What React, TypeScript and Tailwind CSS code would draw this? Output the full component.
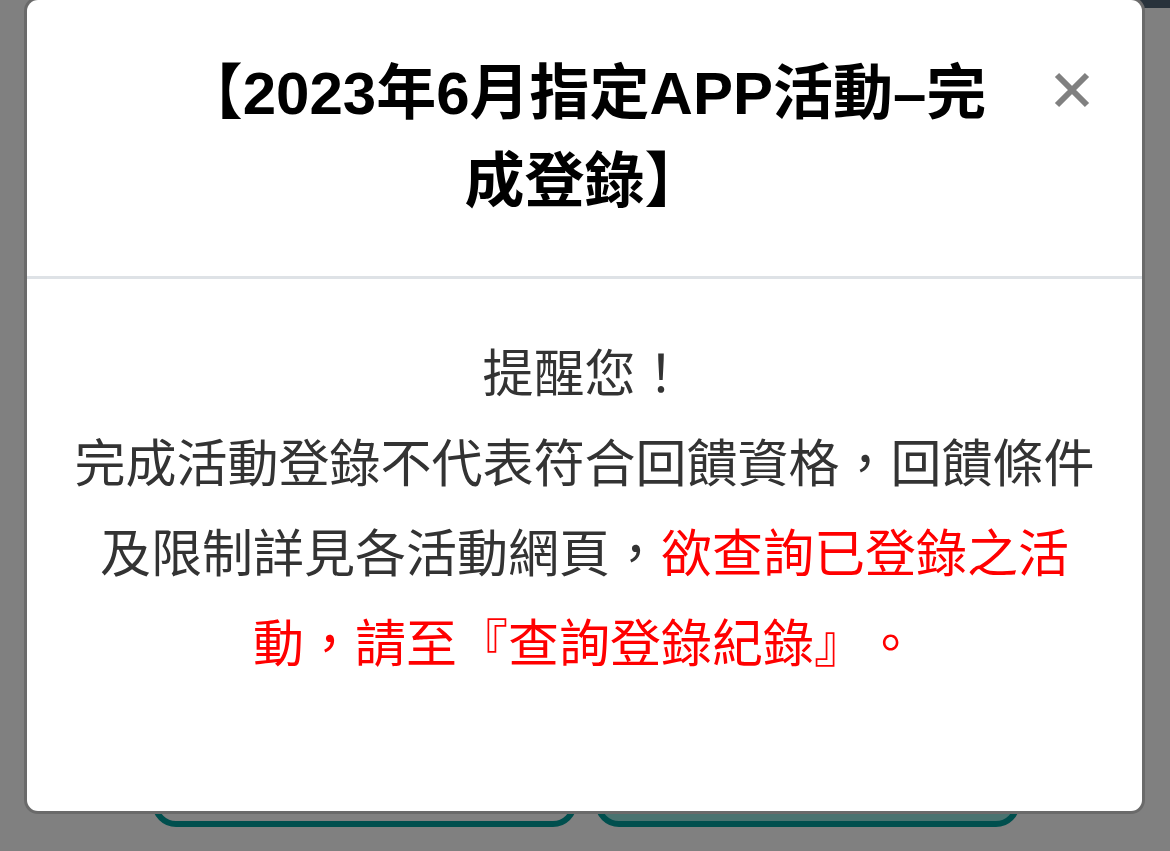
import React from 'react'

const TITLE = '【2023年6月指定APP活動–完成登錄】'

export default function App() {
  return (
    <div className="relative h-[851px] w-full overflow-hidden bg-[#808080]">
      {/* page behind the dimmed backdrop */}
      <div className="flex h-full flex-col">
        <div className="flex justify-end">
          <div className="h-[8px] w-[36px] rounded-bl-[10px] bg-[#28323b]" />
        </div>
        <div className="flex-1" />
        <div className="flex gap-[18px] pb-[24px] pl-[152px] pr-[150px]">
          <div className="h-[90px] flex-1 rounded-[24px] border-[6px] border-[#004f4e] bg-[#808080]" />
          <div className="h-[90px] flex-1 rounded-[24px] border-[6px] border-[#004f4e] bg-[#4a7370]" />
        </div>
      </div>

      <Modal />
    </div>
  )
}

function Modal() {
  return (
    <div className="absolute left-[27px] top-0 w-[1115px] rounded-[11px] bg-white shadow-[0_0_0_3px_#6a6a6a]">
      <div className="relative border-b-[3px] border-[#dee2e6] px-[140px] pb-[50px] pt-[50px]">
        <h1
          className="text-center text-[60px] font-bold leading-[88px] text-black [text-spacing-trim:space-all]"
          style={{ fontFamily: '"Liberation Sans", "Noto Sans CJK TC", sans-serif' }}
        >
          {TITLE}
        </h1>
        <button className="absolute right-[52px] top-[72px] flex h-[36px] w-[36px] items-center justify-center" aria-label="close">
          <svg viewBox="0 0 36 36" className="h-[36px] w-[36px]">
            <path d="M3 3 L33 33 M33 3 L3 33" stroke="#808080" strokeWidth="6" strokeLinecap="butt" />
          </svg>
        </button>
      </div>

      <div
        className="px-[40px] pb-[126px] pt-[46px] text-center text-[51px] leading-[90px] text-[#333333] [text-spacing-trim:space-all]"
        style={{ fontFamily: '"Noto Sans CJK TC", sans-serif' }}
      >
        <p>提醒您！</p>
        <p>
          完成活動登錄不代表符合回饋資格，回饋條件及限制詳見各活動網頁，
          <span className="text-[#ff0000]">欲查詢已登錄之活動，請至『查詢登錄紀錄』。</span>
        </p>
      </div>
    </div>
  )
}
